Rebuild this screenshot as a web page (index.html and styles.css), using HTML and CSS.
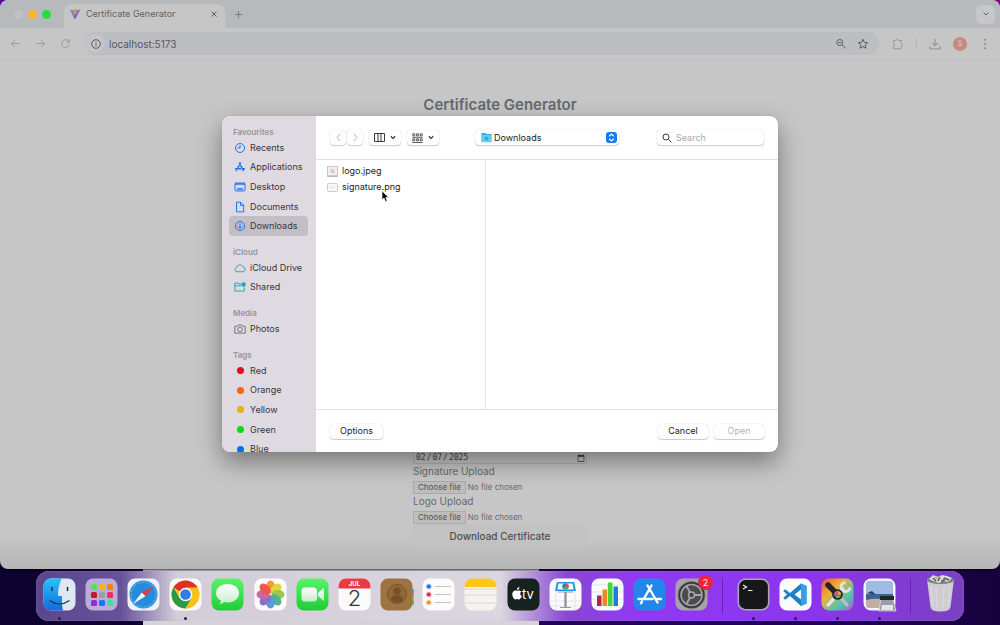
FILE: index.html
```html
<!DOCTYPE html>
<html lang="en">
<head>
<meta charset="utf-8">
<title>Certificate Generator</title>
<link rel="stylesheet" href="styles.css">
</head>
<body class="desktop">
<div class="browser">
  <header class="tab-strip">
    <div class="lights"><span class="light"></span><span class="light amber"></span><span class="light green"></span></div>
    <div class="tab">
      <svg class="favicon" viewBox="0 0 12 12"><defs><linearGradient id="vite" x2=".7" y2="1"><stop stop-color="#6f9fc4"/><stop offset="1" stop-color="#8b49b4"/></linearGradient></defs><path d="M.5 1.5 6 11.5l5.500-10L6 2.600z" fill="url(#vite)"/><path d="M8 .8 4.500 1.500l-.2 4.200 1.200-.2-.4 2.200 3-4H6.800z" fill="#cfa24a"/></svg>
      <span class="tab-title">Certificate Generator</span>
      <button class="plain" aria-label="Close tab"><svg width="8" height="8" viewBox="0 0 8 8"><path d="m1.500 1.500 5 5m0-5-5 5" class="stroke dark"/></svg></button>
    </div>
    <button class="plain new-tab" aria-label="New tab"><svg width="9" height="9" viewBox="0 0 9 9"><path d="M4.500 1v7M1 4.500h7" class="stroke mid"/></svg></button>
    <button class="plain tab-search" aria-label="Search tabs"><svg width="8" height="8" viewBox="0 0 8 8"><path d="m1.500 2.500 2.500 2.500 2.500-2.500" class="stroke dark"/></svg></button>
  </header>
  <nav class="address-row">
    <div class="nav-buttons">
      <button class="plain" aria-label="Back"><svg width="11" height="11" viewBox="0 0 11 11"><path d="M9.500 5.500h-8M5 2 1.500 5.500 5 9" class="stroke light-line"/></svg></button>
      <button class="plain" aria-label="Forward"><svg width="11" height="11" viewBox="0 0 11 11"><path d="M1.500 5.500h8M6 2l3.500 3.500L6 9" class="stroke light-line"/></svg></button>
      <button class="plain" aria-label="Reload"><svg width="11" height="11" viewBox="0 0 11 11"><path d="M9.200 6.300A3.800 3.800 0 1 1 8.300 3L9.500 4.300M9.500 1.200v3.100H6.400" class="stroke light-line"/></svg></button>
    </div>
    <div class="url-bar">
      <span class="site-info"><svg width="12" height="12" viewBox="0 0 12 12"><circle cx="6" cy="6" r="4.300" class="stroke dark"/><path d="M6 5.400v2.800M6 3.400v1" class="stroke dark"/></svg></span>
      <input class="url" aria-label="Address" value="localhost:5173">
      <svg width="12" height="12" viewBox="0 0 12 12"><circle cx="4.800" cy="4.500" r="3" class="stroke dark"/><path d="M3.400 4.500h2.800M7 6.800l3.600 3.600" class="stroke dark"/></svg>
      <svg width="12" height="12" viewBox="0 0 12 12"><path d="m6 1.300 1.400 3.100 3.300.3-2.500 2.200.8 3.300L6 8.500l-3 1.700.8-3.300-2.500-2.200 3.300-.3z" class="stroke dark"/></svg>
    </div>
    <div class="tools">
      <svg width="12" height="12" viewBox="0 0 12 12"><path d="M1.500 2.500h2.700a1.200 1.200 0 0 1 2.400 0h2.700v2.800a1.200 1.200 0 0 1 0 2.400v3H1.500v-3a1.200 1.200 0 0 0 0-2.400z" class="stroke light-line"/></svg>
      <span class="rule"></span>
      <svg width="12" height="12" viewBox="0 0 12 12"><path d="M6 1v6.500M3.200 5 6 7.700 8.800 5M1 8v2.800h10V8" class="stroke light-line thick"/></svg>
      <span class="avatar">S</span>
      <svg width="12" height="12" viewBox="0 0 12 12" fill="#8b8b8b"><circle cx="6" cy="1.800" r="1"/><circle cx="6" cy="6" r="1"/><circle cx="6" cy="10.200" r="1"/></svg>
    </div>
  </nav>
  <main class="page">
    <h1 class="page-title">Certificate Generator</h1>
    <form class="certificate-form">
      <input class="date" type="date" aria-label="Date" value="2025-02-07">
      <label class="field-label" for="signature">Signature Upload</label>
      <div class="file-field"><input id="signature" class="file-input" type="file"><label class="file-button" for="signature">Choose file</label><span>No file chosen</span></div>
      <label class="field-label" for="logo">Logo Upload</label>
      <div class="file-field"><input id="logo" class="file-input" type="file"><label class="file-button" for="logo">Choose file</label><span>No file chosen</span></div>
      <button class="download" type="button">Download Certificate</button>
    </form>
  </main>
</div>

<section class="dialog" role="dialog" aria-label="Choose a file">
  <aside class="sidebar">
    <h2 class="group">Favourites</h2>
    <ul class="places five">
      <li class="place"><svg class="ico blue" viewBox="0 0 12 12"><circle cx="6" cy="6" r="4.500"/><path d="M6 3v3H3.500"/></svg>Recents</li>
      <li class="place"><svg class="ico blue bold" viewBox="0 0 12 12"><path d="M6.800 1.500 3.500 7.500M5.200 1.500l4.300 8.500M1 7.800h6M8.800 7.800H11M2.600 9.200l-.5 1"/></svg>Applications</li>
      <li class="place"><svg class="ico blue" viewBox="0 0 12 12"><rect x="1" y="2" width="10" height="8" rx="1"/><path d="M1 3h10M3 8h6" stroke-width="1.600"/></svg>Desktop</li>
      <li class="place"><svg class="ico blue" viewBox="0 0 12 12"><path d="M2.500 1.200h4.200l3 3v6.600H2.500zM6.500 1.200v3.200h3.200"/></svg>Documents</li>
      <li class="place selected"><svg class="ico blue" viewBox="0 0 12 12"><circle cx="6" cy="6" r="4.500"/><path d="M6 3.200v5M4 6.500l2 2 2-2"/></svg>Downloads</li>
    </ul>
    <h2 class="group">iCloud</h2>
    <ul class="places two">
      <li class="place"><svg class="ico teal" viewBox="0 0 12 12"><path d="M3 9.800a2.300 2.300 0 0 1-.3-4.500 3.300 3.300 0 0 1 6.200-.6 2.600 2.600 0 0 1 .2 5.100z"/></svg>iCloud Drive</li>
      <li class="place"><svg class="ico teal" viewBox="0 0 12 12"><path d="M7 3H5L4 2H.800v8h9.500V6.500M.8 4.800h6"/><circle cx="9.500" cy="3.500" r="1.900" fill="#2aa9b5"/></svg>Shared</li>
    </ul>
    <h2 class="group">Media</h2>
    <ul class="places">
      <li class="place"><svg class="ico gray" viewBox="0 0 12 12"><path d="M.800 3.300h2.500L4.300 2h3.400l1 1.300h2.500v6.900H.800z"/><circle cx="6" cy="6.500" r="2.300"/></svg>Photos</li>
    </ul>
    <h2 class="group">Tags</h2>
    <ul class="places five">
      <li class="place"><span class="tag red"></span>Red</li>
      <li class="place"><span class="tag orange"></span>Orange</li>
      <li class="place"><span class="tag yellow"></span>Yellow</li>
      <li class="place"><span class="tag lime"></span>Green</li>
      <li class="place"><span class="tag azure"></span>Blue</li>
    </ul>
  </aside>
  <div class="chooser">
    <div class="chooser-bar">
      <div class="pair">
        <button class="mac-button arrow" aria-label="Back"><svg width="7" height="9" viewBox="0 0 7 9"><path d="M5 1 2 4.500 5 8" class="stroke pale"/></svg></button>
        <button class="mac-button arrow" aria-label="Forward"><svg width="7" height="9" viewBox="0 0 7 9"><path d="m2 1 3 3.500L2 8" class="stroke pale"/></svg></button>
      </div>
      <button class="mac-button view" aria-label="Column view"><svg width="11" height="9" viewBox="0 0 11 9"><path d="M.500 .500h10v8H.500zM4 .500v8M7 .500v8" class="stroke ink"/></svg><svg width="6" height="5" viewBox="0 0 6 5"><path d="m.8 1.200 2.200 2.200 2.200-2.200" class="stroke ink thick"/></svg></button>
      <button class="mac-button view" aria-label="Group items"><svg width="11" height="10" viewBox="0 0 11 10"><path d="M.8 .8h2v2h-2zM4.500 .8h2v2h-2zM8.200 .8h2v2h-2zM.8 5.800h2v2h-2zM4.500 5.800h2v2h-2zM8.200 5.800h2v2h-2zM.3 4.300h10.400M.3 9.500h10.400" class="stroke ink fine"/></svg><svg width="6" height="5" viewBox="0 0 6 5"><path d="m.8 1.200 2.200 2.200 2.200-2.200" class="stroke ink thick"/></svg></button>
      <div class="location">
        <svg width="11" height="11" viewBox="0 0 11 11"><path d="M.500 1h3.700l1 1h5.300v8H.500z" fill="#36a9df"/><path d="M.500 3h10v7.200H.500z" fill="#65cbf3"/><path d="M3.700 4.700h3.600v3.500H3.700z" fill="#38a7d8"/></svg>
        <select class="location-select" aria-label="Folder"><option>Downloads</option></select>
        <svg width="11" height="11" viewBox="0 0 11 11"><rect width="11" height="11" rx="3" fill="#1777f8"/><path d="m3.200 4.300 2.300-2.200 2.300 2.200M3.200 6.700l2.300 2.200 2.300-2.200" fill="none" stroke="#fff" stroke-width="1.200"/></svg>
      </div>
      <label class="search"><svg width="10" height="10" viewBox="0 0 10 10"><circle cx="4" cy="4" r="3" class="stroke ink"/><path d="m6.300 6.300 3 3" class="stroke ink"/></svg><input class="search-input" type="search" aria-label="Search" placeholder="Search"></label>
    </div>
    <div class="columns">
      <ul class="files">
        <li class="file"><svg width="11" height="11" viewBox="0 0 11 11"><rect x=".5" y=".5" width="10" height="10" fill="#f0eeee" stroke="#c9c7c8"/><circle cx="5.500" cy="5.200" r="1.500" fill="none" stroke="#c87582" stroke-width=".8" stroke-dasharray="3 1"/><path d="M1 10h9" stroke="#aaa"/></svg>logo.jpeg</li>
        <li class="file"><svg width="11" height="11" viewBox="0 0 11 11"><rect x=".5" y="1.500" width="10" height="8" rx="1" fill="#f7f7f7" stroke="#cbcbcb"/><path d="M4 5.500h3" stroke="#ddd"/></svg>signature.png
          <svg class="cursor" width="9" height="13" viewBox="0 0 9 13"><path d="M1 .8v9l2-1.800 1.500 3.600 1.700-.7L4.700 7.400h2.900z" fill="#000" stroke="#fff" stroke-width=".7"/></svg></li>
      </ul>
      <div class="preview"></div>
    </div>
    <footer class="chooser-foot">
      <button class="mac-button labelled">Options</button>
      <button class="mac-button labelled push">Cancel</button>
      <button class="mac-button labelled" disabled>Open</button>
    </footer>
  </div>
</section>

<nav class="dock" aria-label="Dock">
  <div class="app running"><svg viewBox="0 0 33 33"><defs><linearGradient id="fb" x2="0" y2="1"><stop stop-color="#29c3fa"/><stop offset="1" stop-color="#1467df"/></linearGradient><clipPath id="tile"><rect x=".5" y=".5" width="32" height="32" rx="7.500"/></clipPath></defs><g clip-path="url(#tile)"><path d="M0 0h33v33H0z" fill="#dfe7f2"/><path d="M0 0h19q-4 8-4 18h4q-.5 8 1 15H0z" fill="url(#fb)"/></g><path d="M9 9.500v3M24.500 9.500v3" stroke="#183454" stroke-width="1.600" stroke-linecap="round"/><path d="M6.500 22.500q10 7 20 0" fill="none" stroke="#183454" stroke-width="1.200"/></svg></div>
  <div class="app"><svg viewBox="0 0 33 33"><rect x=".5" y=".5" width="32" height="32" rx="7.500" fill="#b9aed8"/><g><rect x="6" y="6" width="6" height="6" rx="1.500" fill="#50e352"/><rect x="14" y="6" width="6" height="6" rx="1.500" fill="#f7b514"/><rect x="22" y="6" width="6" height="6" rx="1.500" fill="#f28210"/><rect x="6" y="14" width="6" height="6" rx="1.500" fill="#d5102c"/><rect x="14" y="14" width="6" height="6" rx="1.500" fill="#9b9fa8"/><rect x="22" y="14" width="6" height="6" rx="1.500" fill="#f82860"/><rect x="6" y="22" width="6" height="6" rx="1.500" fill="#9628d5"/><rect x="14" y="22" width="6" height="6" rx="1.500" fill="#1678f0"/><rect x="22" y="22" width="6" height="6" rx="1.500" fill="#40df98"/></g></svg></div>
  <div class="app"><svg viewBox="0 0 33 33"><rect x=".5" y=".5" width="32" height="32" rx="7.500" fill="#f0f1f4"/><circle cx="16.500" cy="16.500" r="14" fill="#278bdc"/><circle cx="16.500" cy="16.500" r="12.500" fill="none" stroke="#9ad1f7" stroke-width="1.500" stroke-dasharray=".6 1.400"/><path d="m27 8-12.200 6.500 3.600 3.800z" fill="#e33b3a"/><path d="m6 26 8.800-11.500 3.600 3.800z" fill="#f2f5f8"/></svg></div>
  <div class="app running"><svg viewBox="0 0 33 33"><rect x=".5" y=".5" width="32" height="32" rx="7.500" fill="#fafafa"/><circle cx="16.500" cy="16.500" r="14" fill="#fbc116"/><path d="M16.500 16.500 4.400 9.500a14 14 0 0 1 24.200 0z" fill="#de3028"/><path d="M4.400 9.500a14 14 0 0 0 12.100 21l6-10.500-12 0z" fill="#29994a"/><path d="M28.600 9.500H16.500l6 10.500-6 10.500a14 14 0 0 0 12.100-21z" fill="#fbc116"/><circle cx="16.500" cy="16.500" r="6.800" fill="#fff"/><circle cx="16.500" cy="16.500" r="5.300" fill="#327be8"/></svg></div>
  <div class="app"><svg viewBox="0 0 33 33"><defs><linearGradient id="gr" x2="0" y2="1"><stop stop-color="#58f468"/><stop offset="1" stop-color="#1fce35"/></linearGradient><linearGradient id="wh" x2="0" y2="1"><stop stop-color="#fff"/><stop offset="1" stop-color="#c7eccb"/></linearGradient></defs><rect x=".5" y=".5" width="32" height="32" rx="7.500" fill="url(#gr)"/><path d="M16.500 6c7 0 11.500 4 11.500 9.200s-4.500 9.300-11.500 9.300c-1.400 0-2.300-.1-3.400-.4-1.300 1.300-2.600 1.900-4.600 2.100 1-1 1.500-2.200 1.300-3.600C6.700 21 5 18.500 5 15.200 5 10 9.500 6 16.500 6z" fill="url(#wh)"/></svg></div>
  <div class="app"><svg viewBox="0 0 33 33"><rect x=".5" y=".5" width="32" height="32" rx="7.500" fill="#fbfbfb"/><g opacity=".9"><ellipse cx="16.500" cy="9" rx="4.500" ry="6.500" fill="#f78d1c"/><ellipse cx="16.500" cy="9" rx="4.500" ry="6.500" fill="#e0d02c" transform="rotate(45 16.500 16.500)"/><ellipse cx="16.500" cy="9" rx="4.500" ry="6.500" fill="#8cc53c" transform="rotate(90 16.500 16.500)"/><ellipse cx="16.500" cy="9" rx="4.500" ry="6.500" fill="#3fae7d" transform="rotate(135 16.500 16.500)"/><ellipse cx="16.500" cy="9" rx="4.500" ry="6.500" fill="#4a8fd5" transform="rotate(180 16.500 16.500)"/><ellipse cx="16.500" cy="9" rx="4.500" ry="6.500" fill="#7d62c0" transform="rotate(225 16.500 16.500)"/><ellipse cx="16.500" cy="9" rx="4.500" ry="6.500" fill="#c4589d" transform="rotate(270 16.500 16.500)"/><ellipse cx="16.500" cy="9" rx="4.500" ry="6.500" fill="#ef4738" transform="rotate(315 16.500 16.500)"/></g></svg></div>
  <div class="app"><svg viewBox="0 0 33 33"><rect x=".5" y=".5" width="32" height="32" rx="7.500" fill="url(#gr)"/><rect x="5.500" y="9.500" width="15.500" height="14" rx="3.500" fill="url(#wh)"/><path d="m22 15 5-4.500q1-.5 1 .8v10.400q0 1.300-1 .8L22 18z" fill="url(#wh)"/></svg></div>
  <div class="app"><svg viewBox="0 0 33 33"><rect x=".5" y=".5" width="32" height="32" rx="7.500" fill="#fafafa"/><path d="M.500 10.500V8A7.500 7.500 0 0 1 8 .5h17A7.500 7.500 0 0 1 32.500 8v2.500z" fill="#e73c45"/><text x="16.500" y="8" class="cal-month">JUL</text><text x="16.500" y="28" class="cal-day">2</text></svg></div>
  <div class="app"><svg viewBox="0 0 33 33"><path d="M30 11h4v6h-4z" fill="#42a9dd"/><path d="M30 17h4v5h-4z" fill="#f19a29"/><path d="M30 22h4v5h-4z" fill="#55ca50"/><rect x=".5" y=".5" width="32" height="32" rx="7.500" fill="#9d7344"/><circle cx="17" cy="16" r="9.500" fill="#926839" stroke="#77522a"/><circle cx="17" cy="13" r="3.700" fill="#76512a"/><path d="M10.500 22q1-5 6.500-5t6.500 5q-6.500 5-13 0z" fill="#76512a"/></svg></div>
  <div class="app"><svg viewBox="0 0 33 33"><rect x=".5" y=".5" width="32" height="32" rx="7.500" fill="#fbfbfb"/><path d="M13 8.500h16M13 16.500h16M13 24.500h16" stroke="#c3c2c7"/><g stroke-width="1"><circle cx="6.800" cy="8.500" r="2.300" fill="#1c6fdd" stroke="#8bb8ef"/><circle cx="6.800" cy="16.500" r="2.300" fill="#df2940" stroke="#eca0a7"/><circle cx="6.800" cy="24.500" r="2.300" fill="#f19428" stroke="#f5cb98"/></g></svg></div>
  <div class="app"><svg viewBox="0 0 33 33"><rect x=".5" y=".5" width="32" height="32" rx="7.500" fill="#f4f3f0"/><path d="M.500 9V8A7.500 7.500 0 0 1 8 .5h17A7.500 7.500 0 0 1 32.500 8v1z" fill="#fbc719"/><path d="M1 11h31" stroke="#bbb" stroke-dasharray="1 1"/><path d="M1 17h31M1 25h31" stroke="#d9d8d5"/></svg></div>
  <div class="app"><svg viewBox="0 0 33 33"><rect x=".5" y=".5" width="32" height="32" rx="7.500" fill="#15221f"/><path d="M13.300 12.900c-1.100-.6-2.400-.5-3.200 0-.7-.5-2.200-.6-3.300.1-2.300 1.500-1.700 5.600.2 7.700 1.100 1.200 1.900.6 3 .3 1 0 1.700.8 2.600.2 1.100-.7 1.900-1.900 2.300-3.200-2.200-1.100-2.100-3.900-.2-4.600zM9.900 12c-.1-1.700 1-2.900 2.500-3.100.1 1.700-.9 2.900-2.500 3.100z" fill="#fff"/><text x="15" y="21" class="tv">tv</text></svg></div>
  <div class="app"><svg viewBox="0 0 33 33"><rect x=".5" y=".5" width="32" height="32" rx="7.500" fill="#fafafa"/><path d="M1 23h31M1 28h31M7 1v31M26 1v31" stroke="#e5e4e9"/><path d="M8 4h17l2 9H6z" fill="#2392df"/><path d="M9.500 5.500h14l1.200 6H8.300z" fill="#f5f9fc"/><circle cx="16.500" cy="8.500" r="3.200" fill="#36b964"/><path d="M16.500 8.500V5.300a3.200 3.200 0 0 1 2.800 4.800z" fill="#ee4d43"/><path d="M16.500 8.500 13.800 10a3.200 3.200 0 0 1 2.700-4.700z" fill="#257bdc"/><path d="M16.500 14v15" stroke="#898da2" stroke-width="2.200"/><path d="M11 29.500h11M9 14h15" stroke="#9599aa" stroke-width="1.200"/></svg></div>
  <div class="app"><svg viewBox="0 0 33 33"><rect x=".5" y=".5" width="32" height="32" rx="7.500" fill="#fafafa"/><path d="M1 7h31M1 14h31M1 21h31" stroke="#e5e4e9"/><path d="M6 17.500h4.500V28H6z" fill="#ba2351"/><path d="M11.500 11.500H16V28h-4.500z" fill="#ee8a20"/><path d="M16.800 4.500h4.700V28h-4.700z" fill="#41d63b"/><path d="M22.500 8.500H27V28h-4.500z" fill="#2879dc"/></svg></div>
  <div class="app"><svg viewBox="0 0 33 33"><rect x=".5" y=".5" width="32" height="32" rx="7.500" fill="#2386e9"/><path d="m14.500 7.500 10 17M18.500 7.500l-7.700 13.300M5.500 21h14M24 21h4M9 23.500 8 25.300" stroke="#fff" stroke-width="2.400" stroke-linecap="round"/></svg></div>
  <div class="app"><svg viewBox="0 0 33 33"><rect x=".5" y=".5" width="32" height="32" rx="7.500" fill="#a5a3a7"/><circle cx="16.500" cy="17" r="13.300" fill="#38383c" stroke="#56565a" stroke-dasharray="1 1"/><circle cx="16.500" cy="17" r="10.500" fill="#4a4a4f" stroke="#a2a2a5" stroke-width="1.600"/><path d="M16.500 17h10M16.500 17 11.500 8M16.500 17l-5 9" stroke="#a4a4a7" stroke-width="2"/><circle cx="16.500" cy="17" r="3" fill="#444" stroke="#aaa" stroke-width="1.500"/></svg><span class="badge">2</span></div>
  <span class="divider"></span>
  <div class="app running"><svg viewBox="0 0 33 33"><rect x="1.300" y="1.300" width="30.400" height="30.400" rx="7" fill="#171719" stroke="#aaa5b3" stroke-width="1.600"/><path d="m6 7 3.500 2L6 11M11 12.500h4.500" fill="none" stroke="#eee" stroke-width="1.200"/></svg></div>
  <div class="app running"><svg viewBox="0 0 33 33"><rect x=".5" y=".5" width="32" height="32" rx="7.500" fill="#fbfbfd"/><path d="m22 5.500 5.500 2.500v17.500L22 28 11 18l-4.800 3.700-2-1.700 3.800-3.500L4.200 13l2-1.700L11 15zM22 11.500l-6.500 5 6.500 5z" fill="#1f7fc6" fill-rule="evenodd"/><path d="m22 5.500 5.500 2.500v17.500L22 28z" fill="#37a0e4"/></svg></div>
  <div class="app running"><svg viewBox="0 0 33 33"><defs><linearGradient id="rb" y2="1"><stop stop-color="#e84d54"/><stop offset=".35" stop-color="#f0b034"/><stop offset=".7" stop-color="#4bc7ae"/><stop offset="1" stop-color="#b159cf"/></linearGradient></defs><rect x=".5" y=".5" width="32" height="32" rx="7.500" fill="url(#rb)"/><path d="m7 7 8 8" stroke="#252527" stroke-width="5.500" stroke-linecap="round"/><path d="m18 18 8 9" stroke="#b9bcc3" stroke-width="3.500" stroke-linecap="round"/><path d="M7 27 22 11" stroke="#e2e3e8" stroke-width="3.500" stroke-linecap="round"/><path d="M24.500 4.500a4.500 4.500 0 1 0 4.500 5" fill="none" stroke="#e2e3e8" stroke-width="3"/><circle cx="16.500" cy="16.500" r="5.300" fill="#222"/><path d="M16.500 16.500v-3.700a3.700 3.700 0 0 1 3.500 4.500z" fill="#f1ae30"/><path d="M16.500 16.500 20 18a3.700 3.700 0 0 1-6 1z" fill="#44bd6f"/><path d="M16.500 16.500 13.500 18.500a3.700 3.700 0 0 1 3-5.700z" fill="#df4ca8"/></svg></div>
  <div class="app running"><svg viewBox="0 0 33 33"><rect x=".5" y=".5" width="32" height="32" rx="7.500" fill="#f3f4fa"/><path d="M3 6q0-3 3-3h21q3 0 3 3v21H3z" fill="#9fbce6"/><path d="M3 16h27v7H3z" fill="#38639d"/><path d="M3 22q12-3 27 1v4q0 3-3 3H6q-3 0-3-3z" fill="#c4ae9d"/><path d="m4 15 5-2 4 4" fill="#263f61"/><path d="M18 20h12l3 13H16z" fill="#99a0a5" stroke="#e6e6e8" stroke-width=".7"/><path d="M17 18h14v4H17z" fill="#242529"/><path d="M19 27h11v5H18z" fill="#e5e6e8"/></svg></div>
  <span class="divider"></span>
  <div class="app"><svg viewBox="0 0 33 33"><path d="m3 1 3.500 28q.5 4.500 10 4.500t10-4.500L30 1z" fill="#cfcdd2"/><ellipse cx="16.500" cy="2" rx="13.500" ry="4" fill="#7a7c80"/><path d="m5 1 4-4 5 2 4-2 5 1 5 2-4 4-5-1-4 2-6-2z" fill="#dddcd8"/><path d="m9 0 3 3M16-1l-2 4M20 0l5 2M17 3l4-1" stroke="#505c57" stroke-width="1.500"/><path d="m11-1 3 2M18 3l2-3" stroke="#a98144"/><path d="m7 8 2 20M12 9l1 21M20 9l-1 21M26 8l-2 20" stroke="#d8d7db" stroke-width="1.500"/></svg></div>
</nav>
</body>
</html>
```

FILE: styles.css
```css
* { box-sizing: border-box; }

body, h1, h2, ul { margin: 0; padding: 0; }
ul { list-style: none; }
button, input, select { font: inherit; color: inherit; margin: 0; }
svg { display: block; flex: none; overflow: visible; }

.desktop {
  position: relative;
  display: flex;
  flex-direction: column;
  min-height: 100vh;
  overflow: hidden;
  font: 9px/12px Inter, "Liberation Sans", sans-serif;
  color: #333;
  background:
    linear-gradient(90deg, #5b00a8, #8b0090) top / 100% 50% no-repeat,
    linear-gradient(90deg, #0e0230 0 143px, #d5d3d7 143px 539px, #21045a 539px 80%, #17023d);
}

.stroke { fill: none; stroke-width: 1; }
.thick { stroke-width: 1.3; }
.fine { stroke-width: .8; }
.dark { stroke: #5b5d60; }
.mid { stroke: #77797b; }
.light-line { stroke: #9a9a9b; }
.pale { stroke: #b5b5b5; }
.ink { stroke: #39393b; }

.plain {
  display: grid;
  place-items: center;
  padding: 0;
  border: 0;
  background: none;
}

/* Browser window */
.browser {
  flex: 1;
  display: flex;
  flex-direction: column;
  overflow: hidden;
  border-radius: 8px;
  background: linear-gradient(#c6c6c6 0 94%, #b6b6b6);
  box-shadow: 0 1px 3px rgba(0, 0, 0, .8);
}

.tab-strip {
  display: flex;
  align-items: center;
  height: 28px;
  padding-right: 5px;
  background: #b7babc;
}

.lights { display: flex; gap: 5px; width: 64px; padding-left: 14px; }
.light { width: 9px; height: 9px; border-radius: 50%; background: #bfc1c5; }
.amber { background: #fdb32a; }
.green { background: #2bdc3d; }

.tab {
  display: flex;
  align-items: center;
  align-self: flex-end;
  gap: 5px;
  width: 161px;
  height: 24px;
  padding: 0 7px 4px 5px;
  border-radius: 8px 8px 0 0;
  background: #c6c6c6;
}
.favicon { width: 12px; height: 12px; }
.tab-title { flex: 1; color: #606264; }
.new-tab { margin-left: 9px; }
.tab-search { width: 19px; height: 19px; margin-left: auto; border-radius: 6px; background: #c6c7c8; }

.address-row {
  display: flex;
  align-items: center;
  height: 32px;
  padding: 0 9px 0 10px;
  border-bottom: 1px solid #bdbdbd;
  background: #c6c6c6;
}
.nav-buttons { display: flex; gap: 14px; }
.url-bar {
  flex: 1;
  display: flex;
  align-items: center;
  gap: 10px;
  height: 23px;
  margin-left: 14px;
  padding: 0 10px 0 1px;
  border-radius: 12px;
  background: #bcbec2;
}
.site-info { display: grid; place-items: center; width: 19px; height: 19px; border-radius: 50%; background: #c4c5c7; }
.url { flex: 1; min-width: 0; margin-left: -6px; padding: 0; border: 0; background: none; font-size: 10px; color: #56585b; }
.tools { display: flex; align-items: center; gap: 12px; margin-left: 13px; }
.rule { width: 1px; height: 11px; background: #b2b4b7; }
.avatar { width: 14px; height: 14px; border-radius: 50%; background: #c68a81; color: #dcc; font-size: 7px; line-height: 14px; text-align: center; }

.page {
  flex: 1;
  display: flex;
  flex-direction: column;
  justify-content: space-between;
  align-items: center;
  padding: 35px 0 21px;
  color: #65696e;
}
.page-title { font-size: 15px; line-height: 20px; font-weight: 600; }
.certificate-form { display: flex; flex-direction: column; width: 174px; }
.date {
  height: 14px;
  padding: 1px 1px 0;
  border: 1px solid #b3b3b3;
  background: transparent;
  font: 8px/12px "DejaVu Sans Mono", monospace;
  color: #444;
}
.date::-webkit-calendar-picker-indicator { width: 8px; height: 8px; padding: 0; opacity: .7; }
.field-label { padding-bottom: 2px; font-size: 10px; line-height: 14px; }
.file-field { display: flex; align-items: center; gap: 2px; height: 14px; font-size: 8px; }
.file-input { position: absolute; opacity: 0; width: 1px; height: 1px; pointer-events: none; }
.file-button { padding: 0 4px; border: 1px solid #aaa; background: #bdbdbd; line-height: 11px; color: #505050; }
.download {
  height: 24px;
  border: 0;
  border-radius: 4px;
  background: #c2c2c2;
  font-size: 10px;
  font-weight: 500;
  color: #505050;
}

/* File dialog */
.dialog {
  position: absolute;
  top: 116px;
  left: 50%;
  display: flex;
  width: 556px;
  height: 336px;
  overflow: hidden;
  transform: translateX(-50%);
  border-radius: 8px;
  background: #fff;
  box-shadow: 0 0 1px #777, 0 10px 25px rgba(0, 0, 0, .4);
}

.sidebar { width: 94px; padding: 0 8px 0 7px; overflow: hidden; background: #dfdae1; }
.group { padding: 10px 0 0 4px; font-size: 8px; line-height: 12px; font-weight: 600; color: #98939b; }
.places { display: grid; grid-auto-rows: 1fr; min-height: 20px; }
.five { height: 98px; }
.two { height: 39px; }
.place { display: flex; align-items: center; gap: 4px; padding-left: 5px; border-radius: 4px; white-space: nowrap; color: #38353a; }
.selected { background: #c3bec5; }
.ico { width: 12px; height: 12px; fill: none; stroke-width: 1; }
.blue { stroke: #1c75ee; }
.teal { stroke: #2aa9b5; }
.gray { stroke: #77737a; }
.bold { stroke-width: 1.5; }
.tag { width: 7px; height: 7px; margin: 0 2px 0 3px; border-radius: 50%; }
.red { background: #e60b20; }
.orange { background: #ee670c; }
.yellow { background: #e9b00b; }
.lime { background: #15d51b; }
.azure { background: #096bf6; }

.chooser { flex: 1; display: flex; flex-direction: column; min-width: 0; }
.chooser-bar { display: flex; align-items: center; height: 44px; padding: 0 14px; border-bottom: 1px solid #e3e3e3; }
.pair { display: flex; gap: 1px; }
.mac-button {
  display: flex;
  align-items: center;
  justify-content: center;
  gap: 5px;
  height: 15px;
  padding: 0;
  border: 0;
  border-radius: 4px;
  background: #fff;
  box-shadow: 0 0 1px #bbb, 0 1px 1px #ccc;
  color: #222;
}
.mac-button:disabled { color: #b5b5b5; }
.arrow { width: 16px; }
.view { width: 32px; margin-left: 6px; }
.location {
  display: flex;
  align-items: center;
  gap: 2px;
  width: 144px;
  height: 15px;
  margin-left: 36px;
  padding: 0 2px 0 6px;
  border-radius: 4px;
  box-shadow: 0 0 1px #bbb, 0 1px 1px #ccc;
}
.location-select { flex: 1; min-width: 0; padding: 0; border: 0; appearance: none; background: none; color: #222; }
.search {
  display: flex;
  align-items: center;
  gap: 4px;
  width: 107px;
  height: 15px;
  margin-left: auto;
  padding: 0 5px;
  border-radius: 4px;
  box-shadow: 0 0 1px #bbb, 0 1px 1px #ccc;
}
.search-input { flex: 1; min-width: 0; padding: 0; border: 0; appearance: none; background: none; }
.search-input::placeholder { color: #aaa; }

.columns { flex: 1; display: flex; }
.files { width: 170px; padding: 3px 11px; border-right: 1px solid #e3e3e3; }
.file { position: relative; display: flex; align-items: center; gap: 4px; height: 16px; color: #222; }
.cursor { position: absolute; left: 54px; top: 11px; }
.preview { flex: 1; }
.chooser-foot { display: flex; align-items: center; gap: 6px; height: 43px; padding: 0 14px; border-top: 1px solid #e3e3e3; }
.labelled { width: 50px; }
.labelled:first-child { width: 53px; }
.push { margin-left: auto; }

/* Dock */
.dock {
  display: flex;
  height: 50px;
  margin: 2px 36px 4px;
  padding: 0 2px;
  border-radius: 13px;
  background: linear-gradient(90deg, #5a478b, #66529a 85px, #d3ccd9 140px, #dbd6df 465px, #8848d2 530px, #9139f2 600px, #8a35eb 85%, #7941bf);
  box-shadow: inset 0 0 1px #cbb7e7;
}
.app { position: relative; flex: 1; display: flex; justify-content: center; padding-top: 7px; }
.app svg { width: 33px; height: 33px; }
.running::after { content: ""; position: absolute; bottom: 1px; width: 3px; height: 3px; border-radius: 50%; background: #28203a; }
.divider { width: 1px; margin: 7px 9px; background: #6625b5; }
.badge { position: absolute; top: 4px; right: 0; width: 15px; height: 15px; border-radius: 50%; background: #e9273c; color: #fff; line-height: 15px; text-align: center; }
.cal-month { font-size: 6px; font-weight: 700; fill: #fff; text-anchor: middle; }
.cal-day { font-size: 22px; font-weight: 300; fill: #333; text-anchor: middle; }
.tv { font-size: 13px; fill: #fff; }
```
